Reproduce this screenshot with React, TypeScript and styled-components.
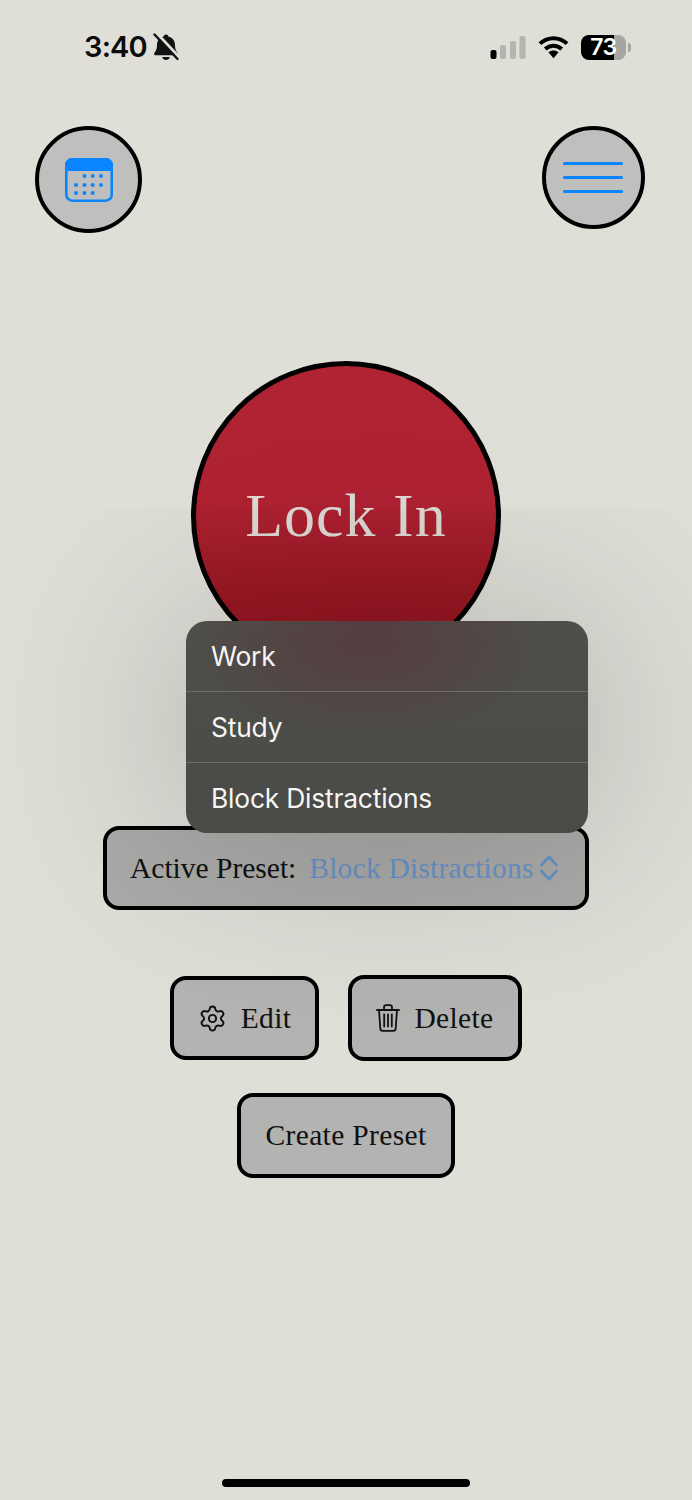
import React from 'react';
import styled, { createGlobalStyle } from 'styled-components';
import { Settings } from 'lucide-react';

// Styles

const GlobalStyle = createGlobalStyle`
  html, body {
    margin: 0;
    padding: 0;
    background: #dededa;
  }
`;

const Screen = styled.main`
  width: 692px;
  height: 1500px;
  overflow: hidden;
  background: #dfdfd8;
  display: flex;
  flex-direction: column;
  align-items: center;
  font-family: 'Liberation Serif', 'Times New Roman', serif;
  color: #111;
`;

const StatusBar = styled.header`
  width: 100%;
  height: 94px;
  box-sizing: border-box;
  padding: 32px 61px 0 84px;
  display: flex;
  justify-content: space-between;
  align-items: flex-start;
  font-family: Inter, 'Liberation Sans', sans-serif;
`;

const StatusGroup = styled.div`
  display: flex;
  align-items: center;
  height: 30px;
`;

const Clock = styled.span`
  font-size: 29px;
  font-weight: 600;
  line-height: 30px;
  letter-spacing: -0.8px;
  color: #0c0c0c;
`;

const Battery = styled.div`
  position: relative;
  width: 45px;
  height: 25px;
  margin-left: 12px;
  border-radius: 8px;
  overflow: hidden;
  background: linear-gradient(90deg, #000 0 73%, #a6a6a0 73% 100%);
  display: flex;
  align-items: center;
  justify-content: center;
  color: #fff;
  font-size: 23px;
  font-weight: 600;
  letter-spacing: -0.5px;
`;

const BatteryNub = styled.div`
  width: 3px;
  height: 9px;
  margin-left: 2px;
  border-radius: 0 3px 3px 0;
  background: #a6a6a0;
`;

const TopRow = styled.div`
  width: 100%;
  box-sizing: border-box;
  padding: 32px 47px 0 35px;
  display: flex;
  justify-content: space-between;
  align-items: flex-start;
`;

const RoundButton = styled.button<{ $size: number }>`
  width: ${(props) => props.$size}px;
  height: ${(props) => props.$size}px;
  padding: 0;
  box-sizing: border-box;
  border: 4px solid #000;
  border-radius: 50%;
  background: #bfbfbd;
  display: flex;
  align-items: center;
  justify-content: center;
`;

const LockButton = styled.button`
  width: 310px;
  height: 310px;
  margin-top: 128px;
  padding: 0 0 2px;
  box-sizing: border-box;
  border: 5px solid #000;
  border-radius: 50%;
  background: linear-gradient(180deg, #b02333 0%, #ae2232 45%, #9a1824 75%, #8f141f 100%);
  color: #dcd8d2;
  font-family: 'Liberation Serif', 'Times New Roman', serif;
  font-size: 62px;
  letter-spacing: 1px;
`;

const PresetAnchor = styled.div`
  position: relative;
  margin-top: 155px;
`;

const PresetBox = styled.div`
  width: 486px;
  height: 84px;
  box-sizing: border-box;
  padding: 0 27px 0 23px;
  border: 4px solid #000;
  border-radius: 16px;
  background: #ababa9;
  display: flex;
  align-items: center;
  font-size: 29.5px;
  white-space: nowrap;
`;

const PresetValue = styled.span`
  margin-left: 13px;
  flex: 1;
  color: #6894ca;
  letter-spacing: 0.22px;
`;

const Menu = styled.ul`
  position: absolute;
  left: 83px;
  bottom: 77px;
  width: 402px;
  margin: 0;
  padding: 0;
  list-style: none;
  border-radius: 21px;
  overflow: hidden;
  background:
    radial-gradient(ellipse 175px 100px at 45% 8%, #563c3e 0%, rgba(86, 60, 62, 0) 100%),
    linear-gradient(180deg, #4e4e4a 0%, #4a4a46 100%);
  box-shadow: 0 0 200px rgba(0, 0, 0, 0.25);
  font-family: Inter, 'Liberation Sans', sans-serif;
`;

const MenuItem = styled.li`
  height: 70px;
  padding-left: 25px;
  display: flex;
  align-items: center;
  color: #f6f6f4;
  font-size: 26.4px;
  letter-spacing: -0.2px;

  & + & {
    border-top: 1px solid #6b6b67;
  }
`;

const ActionRow = styled.div`
  margin-top: 65px;
  display: flex;
  align-items: center;
  gap: 29px;
`;

const ActionButton = styled.button<{ $width: number; $height?: number }>`
  width: ${(props) => props.$width}px;
  height: ${(props) => props.$height ?? 84}px;
  padding: 0;
  box-sizing: border-box;
  border: 4px solid #000;
  border-radius: 16px;
  background: #b3b3b1;
  color: #111;
  display: flex;
  align-items: center;
  justify-content: center;
  gap: 14px;
  font-family: 'Liberation Serif', 'Times New Roman', serif;
  font-size: 29.5px;
  letter-spacing: 0.35px;
`;

const CreateButton = styled(ActionButton)`
  margin-top: 32px;
`;

const HomeIndicator = styled.div`
  width: 248px;
  height: 8px;
  margin-top: auto;
  margin-bottom: 13px;
  border-radius: 4px;
  background: #000;
`;

// Drawings

function BellSlash() {
  return (
    <svg width="26" height="28" viewBox="0 0 26 28" style={{ marginLeft: 6 }}>
      <path
        d="M13 1.500c1.300 0 2.200.9 2.400 2C19.600 4.600 22 8 22 12c0 3 .6 5.400 2.600 8 .9 1.100.2 2.300-1.100 2.300H2.500C1.200 22.300.5 21.100 1.400 20 3.400 17.400 4 15 4 12c0-4 2.400-7.400 6.600-8.500.2-1.100 1.100-2 2.400-2Z"
        fill="#111"
      />
      <path d="M9.200 24a3.900 3.900 0 0 0 7.600 0Z" fill="#111" />
      <path d="M3.500 0 27 25" stroke="#dfdfd8" strokeWidth="3" />
      <path d="M1.500 1.500 24.500 26" stroke="#111" strokeWidth="2.400" strokeLinecap="round" />
    </svg>
  );
}

function Signal() {
  return (
    <svg width="36" height="24" viewBox="0 0 36 24">
      <rect x="0.500" y="15" width="6" height="9" rx="2" fill="#000" />
      <rect x="10" y="10" width="6" height="14" rx="2" fill="#b5b5af" />
      <rect x="20" y="6" width="6" height="18" rx="2" fill="#b5b5af" />
      <rect x="29.500" y="1" width="6" height="23" rx="2" fill="#b5b5af" />
    </svg>
  );
}

function Wifi() {
  return (
    <svg width="31" height="24" viewBox="0 0 32 24" style={{ marginLeft: 12 }}>
      <g fill="none" stroke="#000" strokeWidth="4.200">
        <path d="M2 8.500C10 1 22 1 30 8.500" />
        <path d="M7.500 14c5-4.500 12-4.500 17 0" />
      </g>
      <path d="M10.800 17.500c3-2.400 7.400-2.400 10.400 0L16 23.500Z" fill="#000" />
    </svg>
  );
}

function CalendarIcon() {
  const dots = [
    [19.500, 18],
    [27.700, 18],
    [36, 18],
    [11, 27],
    [19.500, 27],
    [27.700, 27],
    [36, 27],
    [11, 35],
    [19.500, 35],
    [27.700, 35],
  ];
  return (
    <svg width="48" height="44" viewBox="0 0 48 44">
      <path d="M7 0h34a7 7 0 0 1 7 7v6H0V7a7 7 0 0 1 7-7Z" fill="#0a84ff" />
      <rect x="1.300" y="1.300" width="45.400" height="41.400" rx="6" fill="none" stroke="#0a84ff" strokeWidth="2.600" />
      {dots.map(([x, y]) => (
        <rect key={`${x}-${y}`} x={x - 1.800} y={y - 1.800} width="3.600" height="3.600" rx="0.800" fill="#0a84ff" />
      ))}
    </svg>
  );
}

function MenuIcon() {
  return (
    <svg width="62" height="31" viewBox="0 0 62 31">
      <g stroke="#0a84ff" strokeWidth="3" strokeLinecap="round">
        <path d="M1.500 1.500h57" />
        <path d="M1.500 15.500h57" />
        <path d="M1.500 29.500h57" />
      </g>
    </svg>
  );
}

function UpDown() {
  return (
    <svg width="18" height="26" viewBox="0 0 18 26">
      <g fill="none" stroke="#6894ca" strokeWidth="2.800" strokeLinecap="round" strokeLinejoin="round">
        <path d="M1.500 10 9 1.800 16.500 10" />
        <path d="M1.500 16 9 24.200 16.500 16" />
      </g>
    </svg>
  );
}

function TrashIcon() {
  return (
    <svg width="24" height="28" viewBox="0 0 24 28">
      <g fill="none" stroke="#111" strokeWidth="1.800" strokeLinecap="round" strokeLinejoin="round">
        <path d="M1 6h22" />
        <path d="M8 5.500V3.500C8 2 9 1.200 10.200 1.200h3.600C15 1.200 16 2 16 3.500v2" />
        <path d="M3 6l1.300 18.400c.1 1.500 1 2.400 2.500 2.400h10.400c1.500 0 2.400-.9 2.500-2.400L21 6" />
        <path d="M8.200 10.500v12" />
        <path d="M12 10.500v12" />
        <path d="M15.800 10.500v12" />
      </g>
    </svg>
  );
}

const presets = ['Work', 'Study', 'Block Distractions'];

function App(): JSX.Element {
  return (
    <Screen>
      <GlobalStyle />
      <StatusBar>
        <StatusGroup>
          <Clock>3:40</Clock>
          <BellSlash />
        </StatusGroup>
        <StatusGroup>
          <Signal />
          <Wifi />
          <Battery>73</Battery>
          <BatteryNub />
        </StatusGroup>
      </StatusBar>

      <TopRow>
        <RoundButton $size={107}>
          <CalendarIcon />
        </RoundButton>
        <RoundButton $size={103}>
          <MenuIcon />
        </RoundButton>
      </TopRow>

      <LockButton>Lock In</LockButton>

      <PresetAnchor>
        <PresetBox>
          <span>Active Preset:</span>
          <PresetValue>Block Distractions</PresetValue>
          <UpDown />
        </PresetBox>
        <Menu>
          {presets.map((preset) => (
            <MenuItem key={preset}>{preset}</MenuItem>
          ))}
        </Menu>
      </PresetAnchor>

      <ActionRow>
        <ActionButton $width={149}>
          <Settings size={29} strokeWidth={1.6} color="#111" />
          Edit
        </ActionButton>
        <ActionButton $width={174} $height={86}>
          <TrashIcon />
          Delete
        </ActionButton>
      </ActionRow>

      <CreateButton $width={218} $height={85}>Create Preset</CreateButton>

      <HomeIndicator />
    </Screen>
  );
}

export default App;
